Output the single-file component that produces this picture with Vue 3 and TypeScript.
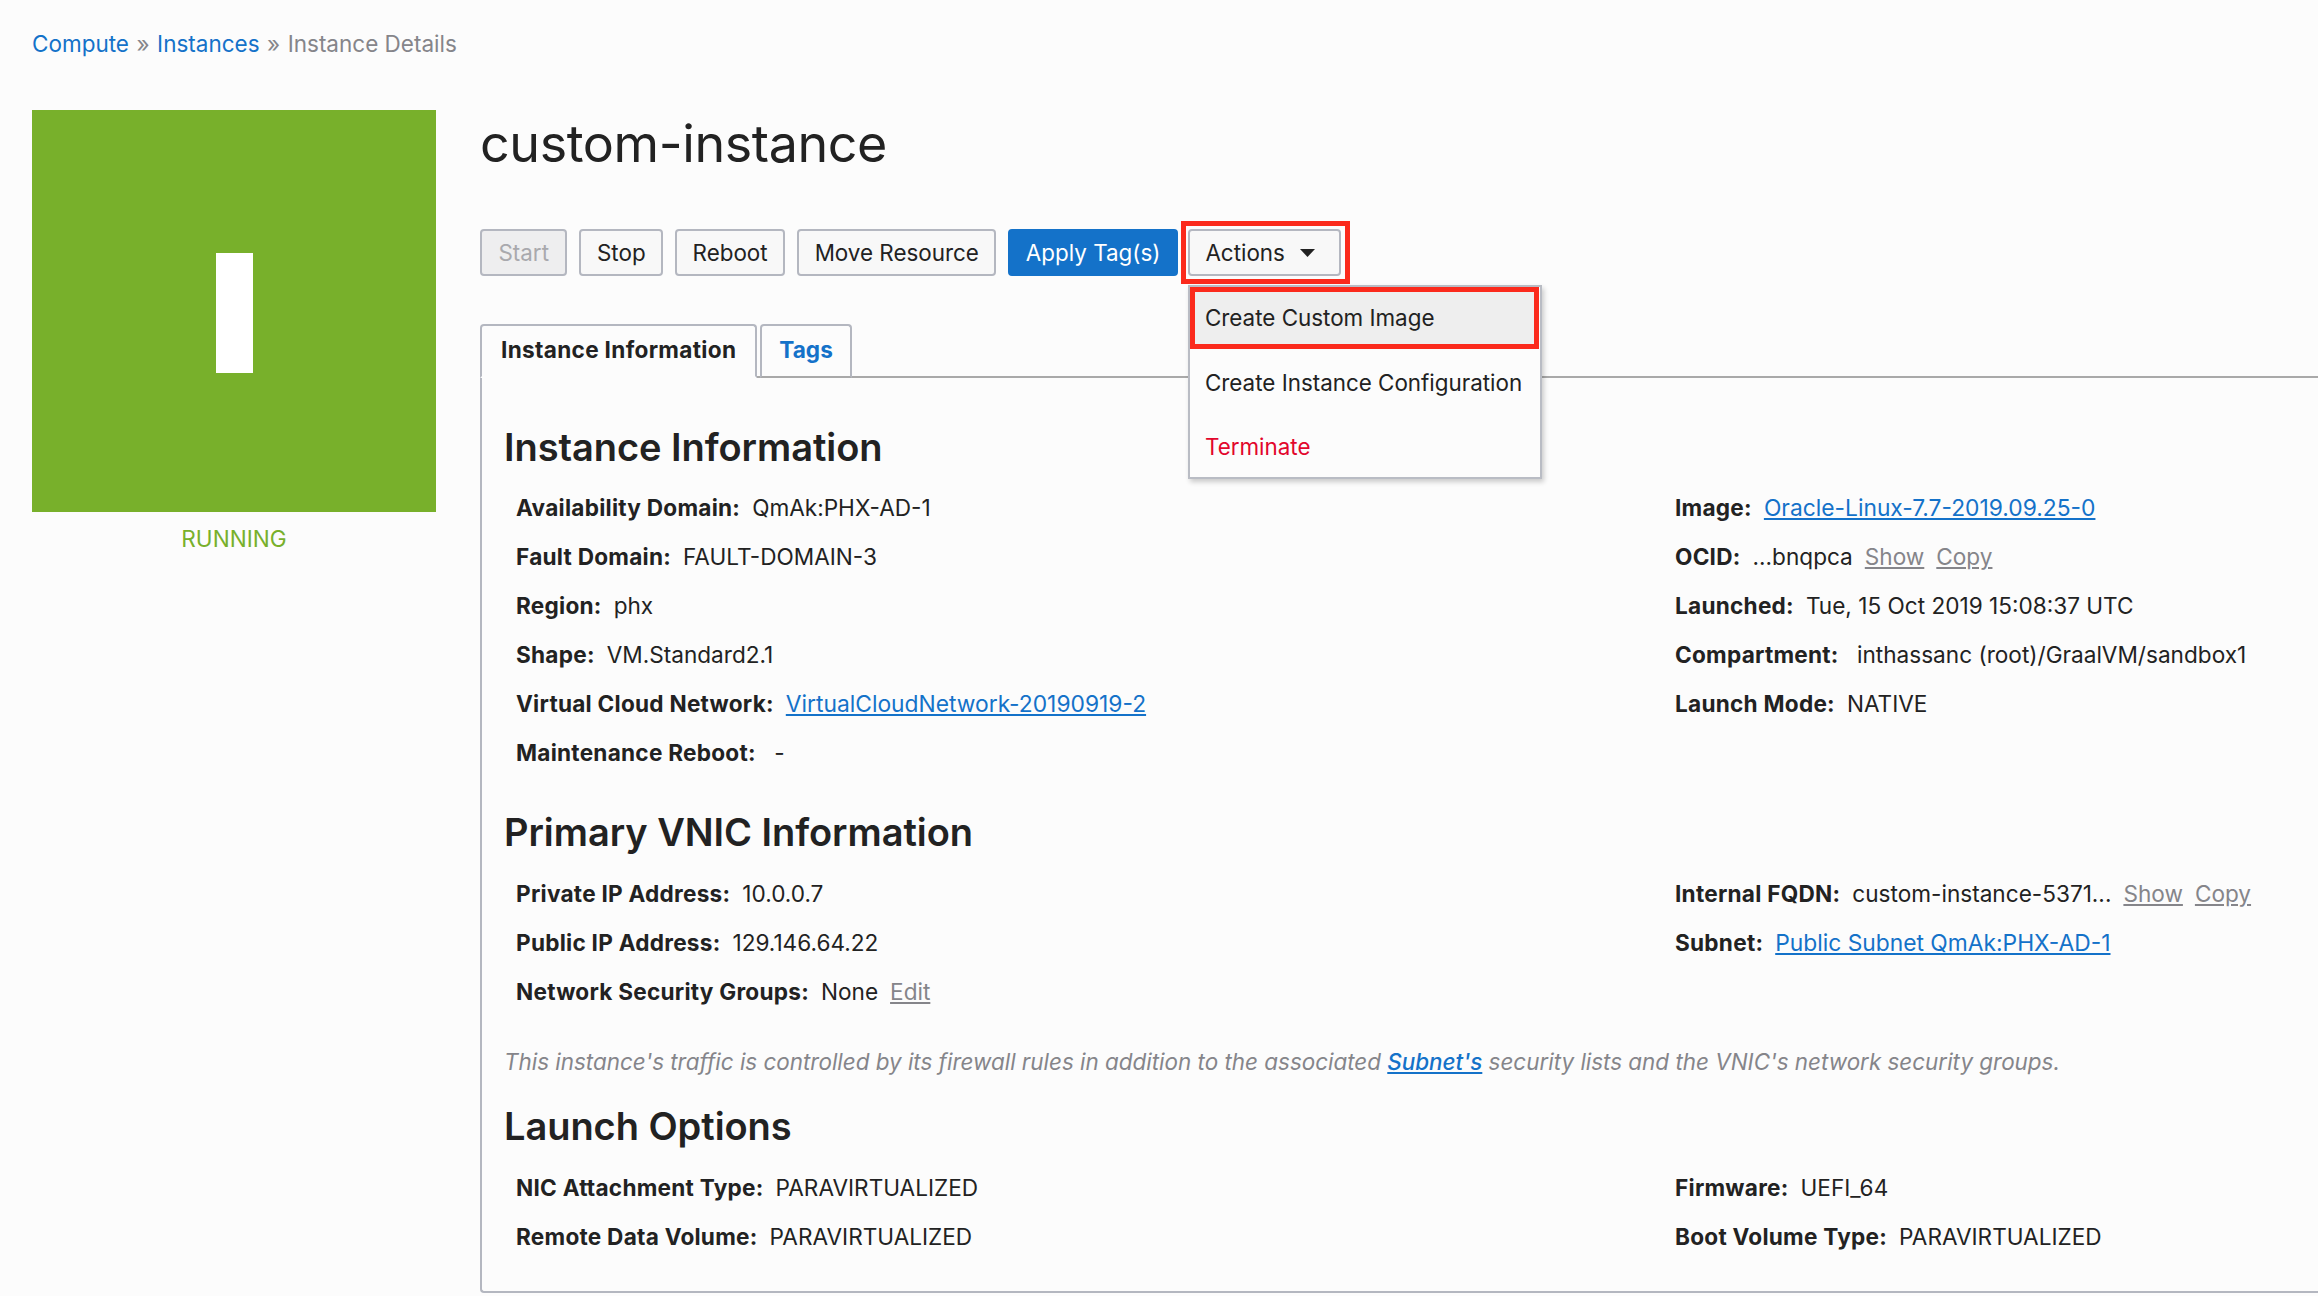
<template>
  <div class="page">
    <nav class="crumbs">
      <a class="crumb">Compute</a>
      <span class="sep">»</span>
      <a class="crumb">Instances</a>
      <span class="sep">»</span>
      <span class="current">Instance Details</span>
    </nav>

    <div class="layout">
      <aside class="side">
        <div class="status-tile"><div class="status-bar"></div></div>
        <div class="status-text">RUNNING</div>
      </aside>

      <main class="main">
        <h1 class="title">custom-instance</h1>

        <div class="toolbar">
          <button class="btn disabled">Start</button>
          <button class="btn">Stop</button>
          <button class="btn">Reboot</button>
          <button class="btn">Move Resource</button>
          <button class="btn primary">Apply Tag(s)</button>
          <div class="actions-wrap">
            <button class="btn actions">
              Actions
              <svg class="caret" width="15" height="8" viewBox="0 0 15 8"><path d="M0 0h15L7.5 8z" fill="#222" /></svg>
            </button>
            <div class="mark mark-actions"></div>
            <ul class="menu">
              <li class="menu-item hover">Create Custom Image</li>
              <li class="menu-item">Create Instance Configuration</li>
              <li class="menu-item danger">Terminate</li>
            </ul>
          </div>
        </div>

        <div class="tabs">
          <div class="tab active">Instance Information</div>
          <div class="tab">Tags</div>
        </div>

        <section class="panel">
          <template v-for="sec in sections" :key="sec.title">
            <h2 class="heading" :class="sec.cls">{{ sec.title }}</h2>
            <div class="columns">
              <div v-for="(col, c) in sec.cols" :key="c" class="col">
                <div v-for="row in col" :key="row.label" class="row">
                  <strong class="label">{{ row.label }}:</strong>
                  <span v-if="row.value" class="value">{{ row.value }}</span>
                  <a v-if="row.link" class="link">{{ row.link }}</a>
                  <a v-for="m in row.muted" :key="m" class="muted">{{ m }}</a>
                </div>
              </div>
            </div>
            <p v-if="sec.note" class="note">
              This instance's traffic is controlled by its firewall rules in addition to the associated
              <a class="link">Subnet's</a>
              security lists and the VNIC's network security groups.
            </p>
          </template>
        </section>
      </main>
    </div>
  </div>
</template>

<script setup lang="ts">
type Row = { label: string; value?: string; link?: string; muted?: string[] };
type Section = { title: string; cls: string; cols: Row[][]; note?: boolean };

const sections: Section[] = [
  {
    title: 'Instance Information',
    cls: 'first',
    cols: [
      [
        { label: 'Availability Domain', value: 'QmAk:PHX-AD-1' },
        { label: 'Fault Domain', value: 'FAULT-DOMAIN-3' },
        { label: 'Region', value: 'phx' },
        { label: 'Shape', value: 'VM.Standard2.1' },
        { label: 'Virtual Cloud Network', link: 'VirtualCloudNetwork-20190919-2' },
        { label: 'Maintenance Reboot', value: ' -' },
      ],
      [
        { label: 'Image', link: 'Oracle-Linux-7.7-2019.09.25-0' },
        { label: 'OCID', value: '...bnqpca', muted: ['Show', 'Copy'] },
        { label: 'Launched', value: 'Tue, 15 Oct 2019 15:08:37 UTC' },
        { label: 'Compartment', value: ' inthassanc (root)/GraalVM/sandbox1' },
        { label: 'Launch Mode', value: 'NATIVE' },
      ],
    ],
  },
  {
    title: 'Primary VNIC Information',
    cls: 'second',
    note: true,
    cols: [
      [
        { label: 'Private IP Address', value: '10.0.0.7' },
        { label: 'Public IP Address', value: '129.146.64.22' },
        { label: 'Network Security Groups', value: 'None', muted: ['Edit'] },
      ],
      [
        { label: 'Internal FQDN', value: 'custom-instance-5371...', muted: ['Show', 'Copy'] },
        { label: 'Subnet', link: 'Public Subnet QmAk:PHX-AD-1' },
      ],
    ],
  },
  {
    title: 'Launch Options',
    cls: 'third',
    cols: [
      [
        { label: 'NIC Attachment Type', value: 'PARAVIRTUALIZED' },
        { label: 'Remote Data Volume', value: 'PARAVIRTUALIZED' },
      ],
      [
        { label: 'Firmware', value: 'UEFI_64' },
        { label: 'Boot Volume Type', value: 'PARAVIRTUALIZED' },
      ],
    ],
  },
];
</script>

<style>
html,
body {
  margin: 0;
  background: #fcfcfc;
}
</style>

<style scoped>
.page {
  width: 2318px;
  height: 1296px;
  overflow: hidden;
  box-sizing: border-box;
  padding: 30px 0 0 32px;
  background: #fcfcfc;
  color: #222;
  font-family: Inter, "Liberation Sans", sans-serif;
  font-size: 22.6px;
}
.crumbs {
  height: 28px;
  line-height: 28px;
  display: flex;
  gap: 7.5px;
  font-size: 22.5px;
}
.crumb {
  color: #1472c9;
}
.sep,
.current {
  color: #85858a;
}
.layout {
  display: flex;
  margin-top: 52px;
}
.side {
  width: 404px;
  margin-right: 44px;
  flex: none;
}
.status-tile {
  height: 402px;
  background: #78b02b;
  display: flex;
  align-items: center;
  justify-content: center;
}
.status-bar {
  width: 37px;
  height: 120px;
  margin-top: 3px;
  background: #fff;
}
.status-text {
  margin-top: 13px;
  text-align: center;
  color: #78b02b;
  line-height: 28px;
}
.main {
  flex: 1;
  min-width: 0;
}
.title {
  margin: 0;
  font-size: 52px;
  font-weight: 400;
  letter-spacing: -0.4px;
  line-height: 68px;
}
.toolbar {
  display: flex;
  gap: 12px;
  margin-top: 51px;
}
.btn {
  height: 47px;
  box-sizing: border-box;
  padding: 0 15.5px;
  border: 2px solid #b4b7c0;
  border-radius: 4px;
  background: #f8f8f8;
  color: #222;
  font: inherit;
  font-size: 22.4px;
}
.disabled {
  padding: 0 16.5px;
  background: #eeeeef;
  color: #a9a9ad;
}
.primary {
  background: #1472c9;
  border-color: #1472c9;
  color: #fff;
}
.actions-wrap {
  position: relative;
  margin-left: -2px;
}
.actions {
  width: 153px;
  text-align: left;
  display: flex;
  align-items: center;
  justify-content: space-between;
  padding-right: 24px;
}
.mark {
  position: absolute;
  border: 5px solid #fb2a1c;
  pointer-events: none;
}
.mark-actions {
  left: -7px;
  top: -8px;
  width: 159px;
  height: 53px;
}
.menu {
  position: absolute;
  z-index: 2;
  left: 0;
  top: 56px;
  width: 354px;
  height: 194px;
  box-sizing: border-box;
  margin: 0;
  padding: 0;
  list-style: none;
  background: #fcfcfc;
  border: 2px solid #b9bcc4;
  box-shadow: 2px 3px 5px rgba(0, 0, 0, 0.2);
  font-size: 22.4px;
}
.menu-item {
  height: 63.5px;
  line-height: 63.5px;
  padding-left: 15px;
  box-sizing: border-box;
  white-space: nowrap;
}
.hover {
  width: 349px;
  height: 62px;
  line-height: 52px;
  padding-left: 10px;
  margin-bottom: 2px;
  background: #eeeeee;
  border: 5px solid #fb2a1c;
}
.danger {
  color: #e2062c;
}
.tabs {
  display: flex;
  margin-top: 48px;
  gap: 3px;
  height: 54px;
  position: relative;
  z-index: 1;
}
.tab {
  box-sizing: border-box;
  height: 54px;
  line-height: 48px;
  padding: 0 17px;
  border: 2px solid #b4b7c0;
  border-bottom: 2px solid #a9a9a9;
  border-radius: 4px 4px 0 0;
  color: #1472c9;
  font-weight: 700;
}
.tab.active {
  padding: 0 19px;
  letter-spacing: 0.32px;
  color: #222;
  border-bottom: 2px solid #fcfcfc;
}
.panel {
  box-sizing: border-box;
  margin-top: -2px;
  height: 917px;
  padding-left: 22px;
  border-left: 2px solid #b4b7c0;
  border-top: 2px solid #a9a9a9;
  border-bottom: 2px solid #b4b7c0;
  border-bottom-left-radius: 4px;
}
.heading {
  margin: 0;
  font-size: 38px;
  font-weight: 600;
  letter-spacing: -0.05px;
  line-height: 50px;
}
.heading.first {
  margin-top: 44px;
}
.heading.second {
  margin-top: 30px;
}
.heading.third {
  margin-top: 19px;
}
.columns {
  display: flex;
  margin-top: 11.5px;
  padding-left: 12px;
}
.first + .columns {
  margin-top: 11px;
}
.col {
  width: 1159px;
  flex: none;
}
.row {
  height: 49px;
  line-height: 49px;
  white-space: pre;
  display: flex;
}
.label {
  font-weight: 700;
  letter-spacing: 0.25px;
  margin-right: 12px;
}
.link {
  color: #1472c9;
  font-size: 22.8px;
  text-decoration: underline;
}
.muted {
  color: #85858a;
  text-decoration: underline;
  margin-left: 12px;
}
.note {
  margin: 26.5px 0 0;
  font-size: 22.43px;
  font-style: italic;
  color: #85858a;
  line-height: 40px;
}
.note .link {
  font-size: 22.43px;
  font-weight: 500;
}
</style>
